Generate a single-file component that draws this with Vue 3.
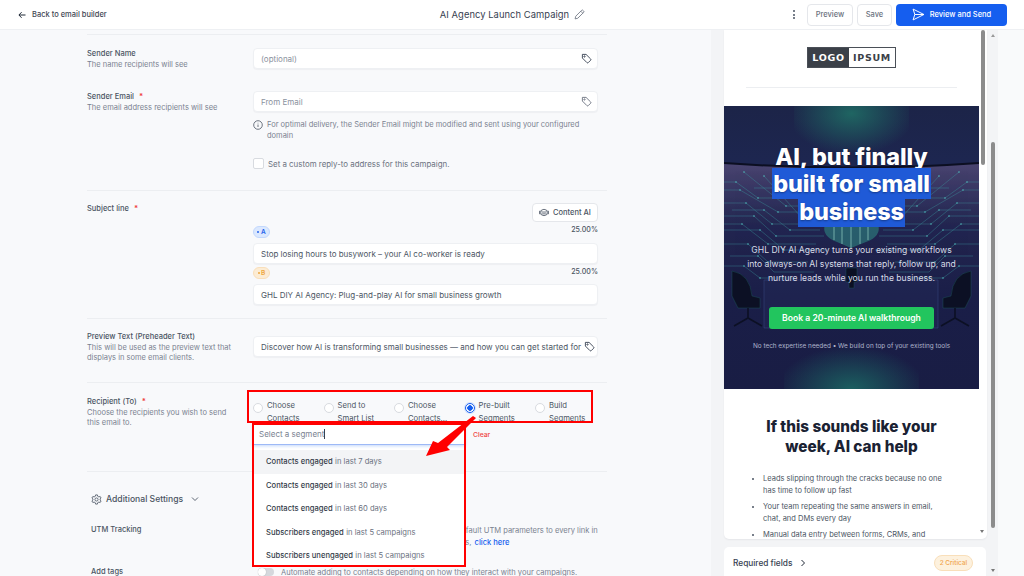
<script setup>
const radios = [
  { lines: ['Choose', 'Contacts'] },
  { lines: ['Send to', 'Smart List'] },
  { lines: ['Choose', 'Contacts...'] },
  { lines: ['Pre-built', 'Segments'], checked: true },
  { lines: ['Build', 'Segments'] }
]

const segments = [
  { who: 'Contacts engaged', when: 'in last 7 days', active: true },
  { who: 'Contacts engaged', when: 'in last 30 days' },
  { who: 'Contacts engaged', when: 'in last 60 days' },
  { who: 'Subscribers engaged', when: 'in last 5 campaigns' },
  { who: 'Subscribers unengaged', when: 'in last 5 campaigns' }
]

// hero artwork: circuit traces, mirrored around the middle of the picture
const traces = [
  'M0 97 L22 97 L48 118 L88 118',
  'M0 110 L30 110 L52 130 L100 130',
  'M0 124 L36 124 L60 144 L104 144',
  'M0 84 L16 84 L54 106 L92 106',
  'M20 66 L62 100 L98 100',
  'M0 138 L24 138 L44 156 L84 156',
  'M6 150 L34 150 L50 166 L90 166',
  'M40 70 L78 112 L110 112',
  'M0 76 L12 76 L34 92 L70 92',
  'M8 104 L40 104 L66 124 L96 124',
  'M0 118 L18 118 L44 138 L92 138',
  'M30 82 L58 82 L80 96',
  'M0 160 L20 160 L36 172 L70 172'
]
const mirrored = traces.map(d => d.replace(/([ML])(\d+)/g, (m, c, x) => c + (255 - Number(x))))
const dots = [[22, 97], [48, 118], [30, 110], [52, 130], [36, 124], [60, 144], [16, 84], [54, 106], [62, 100], [24, 138], [44, 156], [34, 150], [78, 112], [20, 66], [40, 70], [88, 118], [12, 76], [34, 92], [70, 92], [40, 104], [66, 124], [18, 118], [44, 138], [58, 82], [80, 96], [20, 160], [36, 172]]
</script>

<template>
  <div class="app">
    <header class="topbar">
      <div class="back">
        <svg width="8" height="8" viewBox="0 0 8 8" fill="none" stroke="#1f2937" stroke-width="1"><path d="M7.5 4H1M3.6 1.2 .9 4l2.7 2.8" /></svg>
        <span>Back to email builder</span>
      </div>
      <div class="title">
        <span>AI Agency Launch Campaign</span>
        <svg width="11" height="11" viewBox="0 0 12 12" fill="none" stroke="#6b7280" stroke-width=".9"><path d="M1.2 10.8l.7-2.9 6.4-6.4a1 1 0 0 1 1.5 0l.7.7a1 1 0 0 1 0 1.5L4.100 10.100zM7.400 2.400l2.200 2.200" /></svg>
      </div>
      <div class="actions">
        <span class="kebab"><i></i><i></i><i></i></span>
        <button class="btn btn-preview">Preview</button>
        <button class="btn btn-save">Save</button>
        <button class="btn-primary">
          <svg width="13" height="13" viewBox="0 0 12 12" fill="none" stroke="#fff" stroke-width=".9" stroke-linejoin="round"><path d="M1 1l10 5-10 5 1.600-5zM2.600 6H11" /></svg>
          Review and Send
        </button>
      </div>
    </header>

    <main class="main">
      <section class="form-pane">
        <div class="form">
          <div class="section sender">
            <div class="row">
              <div class="label">
                <div class="name">Sender Name</div>
                <div class="help">The name recipients will see</div>
              </div>
              <div class="input placeholder">
                <span>(optional)</span>
                <svg class="tag" viewBox="0 0 12 12" fill="none" stroke="#374151" stroke-width="1"><path d="M1.500 1.500h4l5 5a1 1 0 0 1 0 1.400l-2.600 2.600a1 1 0 0 1-1.400 0l-5-5z" /><circle cx="3.800" cy="3.800" r=".7" /></svg>
              </div>
            </div>
            <div class="row">
              <div class="label">
                <div class="name">Sender Email <b>*</b></div>
                <div class="help">The email address recipients will see</div>
              </div>
              <div>
                <div class="input placeholder">
                  <span>From Email</span>
                  <svg class="tag" viewBox="0 0 12 12" fill="none" stroke="#6b7280" stroke-width="1"><path d="M1.500 1.500h4l5 5a1 1 0 0 1 0 1.400l-2.600 2.600a1 1 0 0 1-1.400 0l-5-5z" /><circle cx="3.800" cy="3.800" r=".7" /></svg>
                </div>
                <div class="note">
                  <svg width="10" height="10" viewBox="0 0 10 10" fill="none" stroke="#4b5563" stroke-width=".8"><circle cx="5" cy="5" r="4.300" /><path d="M5 4.500v2.500M5 2.800v.6" /></svg>
                  <span>For optimal delivery, the Sender Email might be modified and sent using your configured domain</span>
                </div>
                <label class="check"><i></i>Set a custom reply-to address for this campaign.</label>
              </div>
            </div>
          </div>

          <div class="section subject">
            <div class="subject-head">
              <div class="name subject-name">Subject line <b>*</b></div>
              <button class="btn-ai">
                <svg width="10" height="9" viewBox="0 0 11 9" fill="none" stroke="#4b5563" stroke-width=".9"><ellipse cx="5.500" cy="4.500" rx="3.700" ry="3.500" /><path d="M1.800 3H.6v3h1.200M9.200 3h1.200v3H9.200M3 4h5M3.500 6h4" /></svg>
                Content AI
              </button>
            </div>
            <div class="variant">
              <div class="variant-top">
                <span class="pill pill-a"><i></i>A</span>
                <span class="pct">25.00%</span>
              </div>
              <div class="input value">Stop losing hours to busywork – your AI co-worker is ready</div>
            </div>
            <div class="variant variant-b">
              <div class="variant-top">
                <span class="pill pill-b"><i></i>B</span>
                <span class="pct">25.00%</span>
              </div>
              <div class="input value">GHL DIY AI Agency: Plug-and-play AI for small business growth</div>
            </div>
          </div>

          <div class="section preview-text">
            <div class="row">
              <div class="label">
                <div class="name">Preview Text (Preheader Text)</div>
                <div class="help">This will be used as the preview text that displays in some email clients.</div>
              </div>
              <div class="input value">
                <span class="clip">Discover how AI is transforming small businesses — and how you can get started for</span>
                <svg class="tag" viewBox="0 0 12 12" fill="none" stroke="#374151" stroke-width="1"><path d="M1.500 1.500h4l5 5a1 1 0 0 1 0 1.400l-2.600 2.600a1 1 0 0 1-1.400 0l-5-5z" /><circle cx="3.800" cy="3.800" r=".7" /></svg>
              </div>
            </div>
          </div>

          <div class="section recipient">
            <div class="row">
              <div class="label recipient-label">
                <div class="name">Recipient (To) <b>*</b></div>
                <div class="help">Choose the recipients you wish to send this email to.</div>
              </div>
              <div class="recipient-control">
                <div class="radios">
                  <div v-for="r in radios" :key="r.lines.join()" class="radio">
                    <span class="dot" :class="{ checked: r.checked }"></span>
                    <span class="radio-text">{{ r.lines[0] }}<br />{{ r.lines[1] }}</span>
                  </div>
                </div>
                <div class="mark mark-radios"></div>
                <div class="dropdown">
                  <div v-for="s in segments" :key="s.who + s.when" class="option" :class="{ active: s.active }">
                    <strong>{{ s.who }}</strong> {{ s.when }}
                  </div>
                </div>
                <div class="select-row">
                  <div class="select">
                    <span>Select a segment</span><em></em>
                    <svg width="7" height="5" viewBox="0 0 7 5" fill="none" stroke="#c4c8cf" stroke-width=".8"><path d="M1 1l2.500 2.500L6 1" /></svg>
                  </div>
                  <span class="clear">Clear</span>
                </div>
                <div class="mark mark-dropdown"></div>
                <svg class="arrow" width="60" height="44" viewBox="0 0 60 44">
                  <path d="M52 0 L55 2 L26 31 L29 34 L5 40 L12 25 L17 27 Z" fill="#f00" />
                </svg>
              </div>
            </div>
          </div>

          <div class="section settings">
            <div class="settings-head">
              <svg width="11" height="11" viewBox="0 0 12 12" fill="none" stroke="#4b5563" stroke-width=".9"><circle cx="6" cy="6" r="1.700" /><path d="M5 1h2l.3 1.500 1.300.7 1.400-.5 1 1.700-1.100 1 0 1.200 1.100 1-1 1.700-1.400-.5-1.300.7L7 11H5l-.3-1.500-1.300-.7-1.400.5-1-1.700 1.100-1 0-1.200-1.100-1 1-1.700 1.400.5 1.300-.7z" /></svg>
              <span>Additional Settings</span>
              <svg width="8" height="6" viewBox="0 0 8 6" fill="none" stroke="#4b5563" stroke-width=".9"><path d="M1 1.500l3 3 3-3" /></svg>
            </div>
            <div class="setting">
              <div class="name">UTM Tracking</div>
              <span class="toggle"></span>
              <div class="help">This option will automatically add your account's default UTM parameters to every link in<br />your campaigns. To edit the default UTM parameters, <a>click here</a></div>
            </div>
            <div class="setting">
              <div class="name">Add tags</div>
              <span class="toggle"></span>
              <div class="help">Automate adding to contacts depending on how they interact with your campaigns.</div>
            </div>
          </div>
        </div>
      </section>

      <aside class="preview-pane">
        <div class="email-card">
          <div class="email">
            <div class="logo-wrap">
              <div class="logo"><span class="logo-a">LOGO</span><span class="logo-b">IPSUM</span></div>
            </div>
            <div class="hero">
              <svg class="hero-art" viewBox="0 0 255 283" preserveAspectRatio="none">
                <defs>
                  <radialGradient id="glowTop" cx=".5" cy=".1" r=".55"><stop offset="0" stop-color="#1f6562" /><stop offset="1" stop-color="#1f6562" stop-opacity="0" /></radialGradient>
                  <radialGradient id="glowBottom" cx=".5" cy="1" r=".55"><stop offset="0" stop-color="#1b5f60" /><stop offset="1" stop-color="#1b5f60" stop-opacity="0" /></radialGradient>
                  <linearGradient id="band" x1="0" y1="0" x2="0" y2="1"><stop offset="0" stop-color="#4a4470" /><stop offset="1" stop-color="#4a4470" stop-opacity="0" /></linearGradient>
                </defs>
                <rect x="70" y="0" width="115" height="75" fill="url(#glowTop)" />
                <path d="M0 57 Q127 66 255 57 V120 H0Z" fill="url(#band)" />
                <path d="M0 57 Q127 66 255 57" stroke="#0c0f22" stroke-width="2" fill="none" />
                <rect x="60" y="205" width="135" height="78" fill="url(#glowBottom)" />
                <g fill="none" stroke="#3c9aa0" stroke-width=".5" opacity=".75">
                  <path v-for="d in traces" :key="d" :d="d" />
                  <path v-for="d in mirrored" :key="d" :d="d" />
                </g>
                <g fill="#56c5c4" opacity=".9">
                  <circle v-for="p in dots" :key="p.join()" :cx="p[0]" :cy="p[1]" r=".8" />
                  <circle v-for="p in dots" :key="'m' + p.join()" :cx="255 - p[0]" :cy="p[1]" r=".8" />
                </g>
                <path d="M101 118 H154 Q158 130 142 136 L127 142 L113 136 Q97 130 101 118Z" fill="#2f8e85" opacity=".55" />
                <path d="M127 118 V142M110 120 V134M118 120 V138M136 120 V138M144 120 V134" stroke="#a5e3d5" stroke-width=".6" />
                <path d="M40 174 H214 V222 H40Z" fill="#232a58" fill-opacity=".45" stroke="#3a4a80" stroke-width=".5" />
                <g fill="#0c1024" stroke="#1f5a60" stroke-width=".4">
                  <path d="M8 165 Q26 168 28 190 L36 192 V202 H14 L8 190Z" />
                  <path d="M247 165 Q229 168 227 190 L219 192 V202 H241 L247 190Z" />
                  <path d="M122 162 h11 v14 h-3 v6 h-5 v-6 h-3z" />
                </g>
                <g stroke="#0c1024" stroke-width="1.600" fill="none">
                  <path d="M24 202 V212 M10 220 L24 212 L38 220" />
                  <path d="M231 202 V212 M217 220 L231 212 L245 220" />
                </g>
              </svg>
              <div class="hero-body">
                <h1><span>AI, but finally</span><br /><mark>built for small<br />business</mark></h1>
                <p>GHL DIY AI Agency turns your existing workflows into always-on AI systems that reply, follow up, and nurture leads while you run the business.</p>
                <a class="cta">Book a 20-minute AI walkthrough</a>
                <small>No tech expertise needed • We build on top of your existing tools</small>
              </div>
            </div>
            <div class="email-body">
              <h2>If this sounds like your week, AI can help</h2>
              <ul>
                <li>Leads slipping through the cracks because no one<br />has time to follow up fast</li>
                <li>Your team repeating the same answers in email,<br />chat, and DMs every day</li>
                <li>Manual data entry between forms, CRMs, and</li>
              </ul>
            </div>
          </div>
          <div class="inner-bar">
            <span class="inner-thumb"></span>
            <span class="inner-down"></span>
          </div>
        </div>
        <div class="required">
          <span>Required fields</span>
          <svg width="6" height="8" viewBox="0 0 6 8" fill="none" stroke="#1f2937" stroke-width="1"><path d="M1.500 1l3 3-3 3" /></svg>
          <em>2 Critical</em>
        </div>
      </aside>

      <div class="page-bar">
        <span class="page-up"></span>
        <span class="page-thumb"></span>
        <span class="page-down"></span>
      </div>
    </main>
  </div>
</template>

<style>
html, body {
  margin: 0;
  overflow: hidden;
}
</style>

<style scoped>
.app {
  width: 1024px;
  height: 576px;
  display: flex;
  flex-direction: column;
  overflow: hidden;
  font-family: Inter, "Liberation Sans", sans-serif;
  font-size: 7.5px;
  color: #374151;
  background: #f8f9fb;
}

.topbar {
  height: 29px;
  flex: none;
  display: grid;
  grid-template-columns: 1fr auto 1fr;
  align-items: center;
  padding: 0 17px 0 18px;
  background: #fff;
  border-bottom: 1px solid #eef0f3;
  position: relative;
  z-index: 2;
}

.back {
  display: flex;
  align-items: center;
  gap: 6px;
  font-weight: 500;
  font-size: 7.5px;
  color: #3f4754;
}

.title {
  display: flex;
  align-items: center;
  gap: 5px;
  font-size: 9.4px;
  color: #374151;
  letter-spacing: .05px;
}

.actions {
  display: flex;
  align-items: center;
  justify-content: flex-end;
  gap: 4px;
}

.kebab {
  display: flex;
  flex-direction: column;
  gap: 1.5px;
  margin-right: 8px;
}

.kebab i {
  width: 2px;
  height: 2px;
  border-radius: 50%;
  background: #4b5563;
}

.btn {
  height: 22px;
  padding: 0;
  font: 500 7.5px Inter, sans-serif;
  color: #6b7280;
  background: #fff;
  border: 1px solid #e5e7eb;
  border-radius: 4px;
}

.btn-preview {
  width: 46px;
}

.btn-save {
  width: 35px;
}

.btn-primary {
  width: 111px;
  height: 22px;
  display: flex;
  align-items: center;
  justify-content: center;
  gap: 5px;
  font: 500 7.5px Inter, sans-serif;
  color: #fff;
  background: #155eef;
  border: none;
  border-radius: 4px;
}

.main {
  flex: 1;
  display: flex;
  min-height: 0;
  position: relative;
}

.form-pane {
  width: 711px;
  flex: none;
  overflow: hidden;
}

.form {
  width: 520px;
  margin: 4px 0 0 87px;
}

.section {
  border-top: 1px solid #eceef1;
}

.row {
  display: grid;
  grid-template-columns: 166px 345px;
}

.name {
  font-weight: 500;
  color: #4b5563;
  line-height: 10.5px;
}

.name b {
  color: #ef4444;
  margin-left: 3px;
}

.help {
  color: #7a8290;
  line-height: 10.5px;
}

.label .help {
  max-width: 150px;
}

.input {
  height: 21px;
  box-sizing: border-box;
  display: flex;
  align-items: center;
  justify-content: space-between;
  padding: 0 5px 0 7px;
  font-size: 8px;
  background: #fff;
  border: 1px solid #eef0f3;
  border-radius: 4px;
  box-shadow: 0 1px 1px rgba(16, 24, 40, .04);
}

.placeholder {
  color: #8b929e;
}

.value {
  color: #4b5563;
  width: 345px;
}

.clip {
  flex: 1;
  white-space: nowrap;
}

.tag {
  width: 11px;
  height: 11px;
  flex: none;
  margin-left: 3px;
}

.sender {
  padding: 13px 0 21px;
}

.sender .label {
  margin-top: 1px;
}

.sender .row + .row {
  margin-top: 21px;
}

.note {
  display: flex;
  gap: 4px;
  margin-top: 7px;
  font-size: 7.5px;
  line-height: 11px;
  color: #7a8290;
}

.note svg {
  flex: none;
  margin-top: 1px;
}

.check {
  display: flex;
  align-items: center;
  gap: 4px;
  margin-top: 17px;
  font-size: 7.9px;
  color: #6b7280;
}

.check i {
  width: 9px;
  height: 9px;
  background: #fff;
  border: 1px solid #d8dbe0;
  border-radius: 2px;
}

.subject {
  padding: 12px 0 13px;
}

.subject-head {
  width: 511px;
  display: flex;
  justify-content: space-between;
  align-items: flex-start;
}

.subject-name {
  margin-top: 1px;
}

.btn-ai {
  width: 66px;
  height: 19px;
  padding: 0;
  display: flex;
  align-items: center;
  justify-content: center;
  gap: 4px;
  font: 500 7.5px Inter, sans-serif;
  color: #4b5563;
  background: #fff;
  border: 1px solid #e5e7eb;
  border-radius: 4px;
}

.variant {
  margin-left: 166px;
  width: 345px;
}

.variant-top {
  height: 21px;
  box-sizing: border-box;
  padding-top: 3px;
  display: flex;
  align-items: flex-start;
  justify-content: space-between;
}

.variant-b .variant-top {
  height: 20px;
}

.pct {
  font-size: 7.1px;
  line-height: 10px;
  color: #4b5563;
  font-weight: 500;
}

.pill {
  width: 17px;
  height: 12px;
  box-sizing: border-box;
  display: flex;
  align-items: center;
  justify-content: center;
  gap: 1.5px;
  font-size: 6.5px;
  font-weight: 600;
  border-radius: 6px;
  border: 1px solid;
  margin-top: 1px;
}

.variant-b .pill {
  margin-top: 0;
}

.pill i {
  width: 2px;
  height: 2px;
  border-radius: 50%;
  background: currentColor;
}

.pill-a {
  color: #2563eb;
  background: #dbe8fe;
  border-color: #c3d8fd;
}

.pill-b {
  color: #eea63d;
  background: #fcecd4;
  border-color: #f9dfba;
}

.preview-text {
  padding: 13px 0 0;
  height: 50px;
}

.preview-text .input {
  margin-top: 4px;
}

.recipient {
  height: 89px;
  box-sizing: border-box;
  padding-top: 13px;
}

.recipient-label {
  margin-top: 1px;
}

.recipient-control {
  position: relative;
  width: 345px;
}

.radios {
  display: flex;
  padding-top: 3px;
}

.radio {
  width: 70.5px;
  flex: none;
  display: flex;
  gap: 4px;
  align-items: flex-start;
}

.dot {
  width: 10px;
  height: 10px;
  box-sizing: border-box;
  margin-top: 4px;
  flex: none;
  background: #fff;
  border: 1px solid #d8dbe0;
  border-radius: 50%;
}

.dot.checked {
  border: 1px solid #155eef;
  box-shadow: 0 0 0 1px #d5e2fc;
  background: radial-gradient(circle, #155eef 0 2.500px, #fff 3px);
}

.radio-text {
  line-height: 13px;
  color: #4b5563;
  font-size: 7.7px;
}

.mark {
  position: absolute;
  border: 2px solid #f00;
  box-sizing: border-box;
  pointer-events: none;
  z-index: 4;
}

.mark-radios {
  left: -6px;
  top: -6px;
  width: 346px;
  height: 33px;
}

.mark-dropdown {
  left: -1px;
  top: 27px;
  width: 214px;
  height: 144px;
}

.select-row {
  position: absolute;
  left: 0;
  top: 28px;
  display: flex;
  align-items: center;
  gap: 8px;
  z-index: 3;
}

.select {
  width: 212px;
  height: 21px;
  box-sizing: border-box;
  display: flex;
  align-items: center;
  padding: 0 6px;
  font-size: 8px;
  color: #7a8290;
  background: #fff;
  border-bottom: 1px solid #9db9f6;
  box-shadow: 0 1px 3px rgba(21, 94, 239, .25);
}

.select em {
  width: 1px;
  height: 10px;
  margin-left: 0;
  background: #374151;
}

.select svg {
  margin-left: auto;
}

.clear {
  font-size: 6.8px;
  font-weight: 500;
  color: #ef4444;
}

.dropdown {
  position: absolute;
  left: -1px;
  top: 27px;
  width: 214px;
  height: 144px;
  box-sizing: border-box;
  padding: 27px 2px 2px;
  background: #fff;
  z-index: 2;
}

.option {
  height: 23.5px;
  display: flex;
  align-items: center;
  gap: 2.500px;
  padding-left: 12px;
  font-size: 7.6px;
  color: #6b7280;
  white-space: nowrap;
}

.option strong {
  font-weight: 500;
  color: #333b48;
}

.option.active {
  background: #f3f4f6;
}

.arrow {
  position: absolute;
  left: 168px;
  top: 20px;
  z-index: 5;
}

.settings {
  padding: 20px 0 0 4px;
}

.settings-head {
  display: flex;
  align-items: center;
  gap: 4px;
  height: 14px;
  font-size: 8.600px;
  font-weight: 500;
  color: #4b5563;
}

.settings-head svg:last-child {
  margin-left: 4px;
}

.setting {
  display: grid;
  grid-template-columns: 167px 16px 1fr;
  column-gap: 0;
  margin-top: 19px;
  min-height: 23px;
}

.setting + .setting {
  margin-top: 18px;
}

.setting .help {
  margin-left: 7px;
  font-size: 7.550px;
  line-height: 12px;
  white-space: nowrap;
}

.setting a {
  color: #155eef;
  font-weight: 500;
  margin-left: 1px;
}

.toggle {
  width: 16px;
  height: 8px;
  margin-top: 1px;
  border-radius: 4px;
  background: #d5d8dd;
  position: relative;
}

.toggle::after {
  content: '';
  position: absolute;
  left: 0;
  top: 0;
  width: 8px;
  height: 8px;
  border-radius: 50%;
  background: #fff;
  box-shadow: 0 0 1px rgba(0, 0, 0, .3);
}

.preview-pane {
  width: 287px;
  flex: none;
  box-sizing: border-box;
  padding: 0 11px 0 13px;
  background: #f3f4f6;
  display: flex;
  flex-direction: column;
  gap: 8px;
  overflow: hidden;
}

.email-card {
  height: 509px;
  flex: none;
  display: flex;
  background: #fff;
  border-radius: 0 0 5px 5px;
  box-shadow: 0 1px 2px rgba(16, 24, 40, .06);
  overflow: hidden;
}

.email {
  width: 255px;
  flex: none;
  overflow: hidden;
}

.logo-wrap {
  height: 58px;
  margin: 0 22px 18px;
  padding-top: 17px;
  box-sizing: border-box;
  border-bottom: 1px solid #eceef1;
  display: flex;
  justify-content: center;
  align-items: flex-start;
}

.logo {
  display: flex;
  height: 21px;
  width: 89px;
  box-sizing: border-box;
  border: 1px solid #4a4f57;
  font: 700 9.500px/19px "DejaVu Sans", sans-serif;
  letter-spacing: .7px;
}

.logo-a {
  width: 41px;
  text-align: center;
  color: #fff;
  background: #3b4048;
}

.logo-b {
  flex: 1;
  text-align: center;
  color: #3b4048;
}

.hero {
  height: 283px;
  position: relative;
  background: linear-gradient(#1c2448 0, #1d2650 56px, #232650 120px, #1a1e48 190px, #191d44 100%);
  color: #fff;
  text-align: center;
  overflow: hidden;
}

.hero-art {
  position: absolute;
  inset: 0;
  width: 100%;
  height: 100%;
}

.hero-body {
  position: relative;
  display: flex;
  flex-direction: column;
  align-items: center;
  padding-top: 37px;
}

.hero-body h1 {
  margin: 0;
  font: 800 23.400px/27.300px Inter, sans-serif;
  letter-spacing: -.1px;
  text-shadow: 0 1px 2px rgba(0, 0, 0, .35);
}

.hero-body mark {
  color: #fff;
  background: #1f5ad7;
  padding: 1px 1px;
  -webkit-box-decoration-break: clone;
  box-decoration-break: clone;
}

.hero-body p {
  width: 215px;
  margin: 18px 0 0;
  font-size: 8.600px;
  line-height: 14.200px;
  color: #d8dce8;
}

.cta {
  width: 165px;
  height: 22px;
  margin-top: 21px;
  display: flex;
  align-items: center;
  justify-content: center;
  font-size: 8.600px;
  font-weight: 600;
  color: #fff;
  background: #22c55e;
  border-radius: 3px;
}

.hero-body small {
  margin-top: 13px;
  font-size: 6.400px;
  color: #aeb5cb;
  white-space: nowrap;
}

.email-body {
  padding: 28px 22px 0;
}

.email-body h2 {
  margin: 0;
  font: 800 15.300px/19.500px Inter, sans-serif;
  color: #1a2233;
  text-align: center;
}

.email-body ul {
  margin: 17px 0 0;
  padding: 0 0 0 17px;
  font-size: 7.500px;
  line-height: 12px;
  color: #4b5563;
}

.email-body li {
  margin-bottom: 4px;
}

.inner-bar {
  flex: 1;
  position: relative;
}

.inner-thumb {
  position: absolute;
  left: 2px;
  top: 0;
  width: 3.500px;
  height: 135px;
  border-radius: 2px;
  background: #8c8c8c;
}

.inner-down {
  position: absolute;
  left: 1px;
  bottom: 4px;
  border: 2.500px solid transparent;
  border-top: 3px solid #777;
}

.required {
  height: 40px;
  flex: none;
  width: 262px;
  box-sizing: border-box;
  padding: 0 13px 8px 9px;
  display: flex;
  align-items: center;
  gap: 8px;
  font-size: 8.300px;
  font-weight: 500;
  color: #374151;
  background: #fff;
  border-radius: 5px 5px 0 0;
}

.required em {
  margin-left: auto;
  padding: 3px 5px;
  font-size: 6.400px;
  font-style: normal;
  font-weight: 500;
  color: #f0a34a;
  background: #fdf1de;
  border: 1px solid #f9dfba;
  border-radius: 9px;
}

.page-bar {
  flex: 1;
  position: relative;
  background: #f9fafb;
}

.page-thumb {
  position: absolute;
  left: -7px;
  top: 112px;
  width: 4px;
  height: 386px;
  border-radius: 2px;
  background: #8c8c8c;
}

.page-up,
.page-down {
  position: absolute;
  left: -7px;
  border: 2.500px solid transparent;
}

.page-up {
  top: 2px;
  border-bottom: 3px solid #999;
}

.page-down {
  bottom: 2px;
  border-top: 3px solid #777;
}
</style>
